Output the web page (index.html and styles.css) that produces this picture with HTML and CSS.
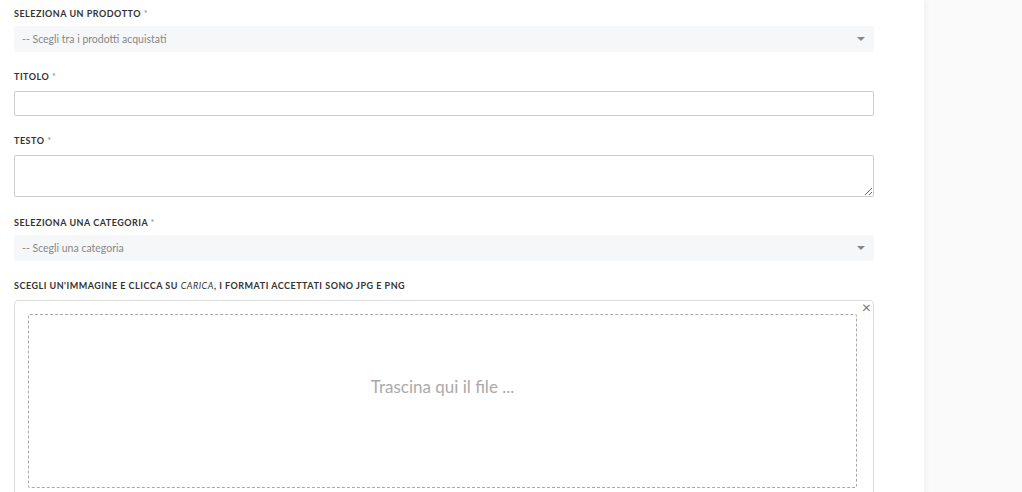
FILE: index.html
```html
<!DOCTYPE html>
<html lang="it">
<head>
  <meta charset="UTF-8">
  <meta name="viewport" content="width=device-width, initial-scale=1.0">
  <title>Nuova recensione</title>
  <link rel="stylesheet" href="styles.css">
</head>
<body>
  <div class="page">
    <main class="panel">
      <form class="review-form">
        <div class="form-group">
          <label class="control-label for-select">Seleziona un prodotto <span class="req">*</span></label>
          <div class="select-box">
            <span class="select-text">-- Scegli tra i prodotti acquistati</span>
            <span class="caret"></span>
          </div>
        </div>

        <div class="form-group">
          <label class="control-label">Titolo <span class="req">*</span></label>
          <input class="form-control" type="text">
        </div>

        <div class="form-group tall">
          <label class="control-label">Testo <span class="req">*</span></label>
          <textarea class="form-control textarea"></textarea>
        </div>

        <div class="form-group">
          <label class="control-label for-select">Seleziona una categoria <span class="req">*</span></label>
          <div class="select-box">
            <span class="select-text">-- Scegli una categoria</span>
            <span class="caret"></span>
          </div>
        </div>

        <div class="form-group">
          <label class="control-label">Scegli un'immagine e clicca su <em>carica</em>, i formati accettati sono JPG e PNG</label>
          <div class="file-preview">
            <span class="close">&times;</span>
            <div class="drop-zone">
              <span class="drop-title">Trascina qui il file ...</span>
            </div>
          </div>
        </div>
      </form>
    </main>
    <aside class="sidebar"></aside>
  </div>
</body>
</html>
```

FILE: styles.css
```css
* {
  box-sizing: border-box;
  font-family: Lato, "Open Sans", sans-serif;
}
html, body {
  margin: 0;
  height: 100%;
  background: #fafafa;
}
.page {
  display: flex;
  min-height: 100%;
}
.panel {
  width: 924px;
  background: #fff;
  box-shadow: 2px 0 6px rgba(0, 0, 0, 0.04);
  padding: 7px 50px 0 14px;
}
.sidebar {
  flex: 1;
}
.form-group {
  margin-bottom: 18px;
}
.form-group.tall {
  margin-bottom: 19px;
}
.control-label {
  display: block;
  font-size: 9px;
  line-height: 14px;
  font-weight: 700;
  letter-spacing: 0.5px;
  text-transform: uppercase;
  color: #333;
  margin-bottom: 7px;
}
.control-label.for-select {
  margin-bottom: 5px;
}
.control-label em {
  font-weight: 400;
}
.req {
  color: #888;
  font-weight: 400;
}
.select-box {
  display: flex;
  align-items: center;
  justify-content: space-between;
  height: 26px;
  padding: 0 9px 0 8px;
  background: #f6f7f9;
  border-radius: 3px;
}
.select-text {
  font-size: 10.5px;
  color: #888;
}
.caret {
  width: 0;
  height: 0;
  border-left: 4px solid transparent;
  border-right: 4px solid transparent;
  border-top: 4px solid #888;
}
.form-control {
  display: block;
  width: 100%;
  height: 25px;
  border: 1px solid #ccc;
  border-radius: 2px;
  background: #fff;
  margin: 0;
  padding: 4px 8px;
}
.textarea {
  height: 42px;
  resize: vertical;
}
.file-preview {
  position: relative;
  border: 1px solid #ddd;
  border-radius: 4px;
  padding: 13px 16px 12px 13px;
}
.close {
  position: absolute;
  top: 0;
  right: 2px;
  font-size: 16px;
  line-height: 12px;
  color: #777;
}
.drop-zone {
  display: flex;
  flex-direction: column;
  align-items: center;
  height: 174px;
  padding-top: 62px;
  border: 1px dashed #aaa;
  border-radius: 2px;
}
.drop-title {
  font-size: 17px;
  line-height: 20px;
  color: #aaa;
}
```
